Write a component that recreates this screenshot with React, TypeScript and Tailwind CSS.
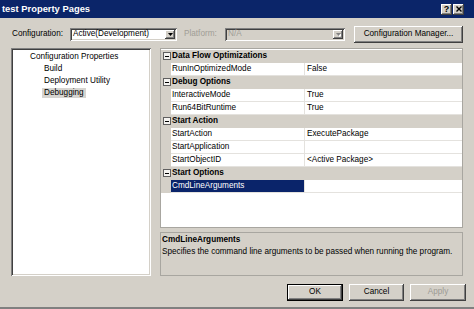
import React from 'react';

const RAISED = 'shadow-[inset_-1px_-1px_0_#404040,inset_1px_1px_0_#ffffff,inset_-2px_-2px_0_#808080]';
const SUNKEN = 'shadow-[inset_1px_1px_0_#808080,inset_-1px_-1px_0_#ffffff,inset_2px_2px_0_#404040,inset_-2px_-2px_0_#d4d0c8]';

type Row =
  | { kind: 'cat'; label: string }
  | { kind: 'prop'; name: string; value: string; selected?: boolean };

const ROWS: Row[] = [
  { kind: 'cat', label: 'Data Flow Optimizations' },
  { kind: 'prop', name: 'RunInOptimizedMode', value: 'False' },
  { kind: 'cat', label: 'Debug Options' },
  { kind: 'prop', name: 'InteractiveMode', value: 'True' },
  { kind: 'prop', name: 'Run64BitRuntime', value: 'True' },
  { kind: 'cat', label: 'Start Action' },
  { kind: 'prop', name: 'StartAction', value: 'ExecutePackage' },
  { kind: 'prop', name: 'StartApplication', value: '' },
  { kind: 'prop', name: 'StartObjectID', value: '<Active Package>' },
  { kind: 'cat', label: 'Start Options' },
  { kind: 'prop', name: 'CmdLineArguments', value: '', selected: true },
];

function DropArrow({ disabled }: { disabled?: boolean }) {
  return (
    <div className={`w-[10px] h-full bg-[#d4d0c8] flex items-center justify-center ${RAISED}`}>
      <svg width="5" height="4" viewBox="0 0 5 4">
        {disabled && <path d="M1 1h5L3.5 4z" fill="#ffffff" />}
        <path d="M0 0h5L2.5 3z" fill={disabled ? '#808080' : '#000000'} />
      </svg>
    </div>
  );
}

function Minus() {
  return (
    <div className="w-[8px] h-[8px] border border-[#606060] bg-[#f4f3f0] flex items-center justify-center">
      <div className="w-[4px] h-px bg-black" />
    </div>
  );
}

function Btn({ label, w, isDefault, disabled }: { label: string; w: string; isDefault?: boolean; disabled?: boolean }) {
  return (
    <div className={`${w} h-[17px] ${isDefault ? 'border border-black' : ''}`}>
      <div
        className={`w-full h-full bg-[#d4d0c8] flex items-center justify-center ${RAISED} ${
          disabled ? 'text-[#9c9a94]' : 'text-black'
        }`}
      >
        {label}
      </div>
    </div>
  );
}

export default function App() {
  return (
    <div
      className="w-[474px] h-[309px] bg-[#d4d0c8] flex flex-col text-[8.2px] leading-none text-black overflow-hidden"
      style={{ fontFamily: '"Liberation Sans", Arial, sans-serif' }}
    >
      {/* title bar */}
      <div className="h-[18px] bg-[#0b2569] flex items-center justify-between pl-[2px] pr-[10px]">
        <span className="text-white font-bold text-[9.4px]">test Property Pages</span>
        <div className="flex gap-[1px]">
          <div className={`w-[11px] h-[11px] bg-[#d4d0c8] flex items-center justify-center font-bold text-[9px] ${RAISED}`}>?</div>
          <div className={`w-[11px] h-[11px] bg-[#d4d0c8] flex items-center justify-center ${RAISED}`}>
            <svg width="6" height="6" viewBox="0 0 6 6">
              <path d="M0.5 0.5l5 5M5.5 0.5l-5 5" stroke="#000" strokeWidth="1.4" />
            </svg>
          </div>
        </div>
      </div>

      {/* configuration row */}
      <div className="mt-[8px] h-[17px] flex items-center pl-[12px]">
        <span className="w-[58px]">Configuration:</span>
        <div className={`w-[107px] h-[13px] bg-white flex items-center justify-between p-[2px] ${SUNKEN}`}>
          <span className="pl-[1px]">Active(Development)</span>
          <DropArrow />
        </div>
        <span className="ml-[7px] w-[41px] text-[#a09d96]">Platform:</span>
        <div className={`w-[120px] h-[13px] bg-[#d4d0c8] flex items-center justify-between p-[2px] ${SUNKEN}`}>
          <span className="pl-[1px] text-[#a09d96]">N/A</span>
          <DropArrow disabled />
        </div>
        <div className="ml-[9px]">
          <Btn label="Configuration Manager..." w="w-[109px]" />
        </div>
      </div>

      {/* panels */}
      <div className="mt-[5px] h-[228px] flex pl-[11px]">
        <div className={`w-[140px] h-full bg-white pt-[3px] ${SUNKEN}`}>
          <div className="h-[12px] flex items-center pl-[19px]">Configuration Properties</div>
          <div className="h-[12px] flex items-center pl-[33px]">Build</div>
          <div className="h-[12px] flex items-center pl-[33px]">Deployment Utility</div>
          <div className="h-[12px] flex items-center pl-[31px]">
            <span className="h-[10px] px-[2px] bg-[#d6d4d0] flex items-center">Debugging</span>
          </div>
        </div>

        <div className="ml-[9px] w-[303px] h-full flex flex-col">
          <div className="h-[180px] border border-[#a8a6a0] bg-white pt-px">
            {ROWS.map((r, i) =>
              r.kind === 'cat' ? (
                <div key={i} className="h-[13px] bg-[#d4d0c8] flex items-center border-b border-[#d4d0c8]">
                  <div className="w-[11px] flex justify-center">
                    <Minus />
                  </div>
                  <span className="font-bold">{r.label}</span>
                </div>
              ) : (
                <div key={i} className="h-[13px] flex">
                  <div className="w-[10px] bg-[#d4d0c8]" />
                  <div className="w-[134px] border-b border-r border-[#e4e2de] flex items-center">
                    <span
                      className={`h-[12px] flex items-center pl-[1px] w-full ${
                        r.selected ? 'bg-[#0a246a] text-white' : ''
                      }`}
                    >
                      {r.name}
                    </span>
                  </div>
                  <div className="flex-1 border-b border-[#e4e2de] flex items-center pl-[2px]">{r.value}</div>
                </div>
              )
            )}
          </div>
          <div className="mt-[4px] h-[44px] border border-[#a8a6a0] bg-[#d4d0c8] pt-[1px] pl-[1px]">
            <div className="h-[12px] flex items-center font-bold">CmdLineArguments</div>
            <div className="h-[12px] flex items-center">
              Specifies the command line arguments to be passed when running the program.
            </div>
          </div>
        </div>
      </div>

      {/* buttons */}
      <div className="mt-[8px] flex justify-end gap-[6px] pr-[8px]">
        <Btn label="OK" w="w-[56px]" isDefault />
        <Btn label="Cancel" w="w-[55px]" />
        <Btn label="Apply" w="w-[56px]" disabled />
      </div>
      <div className="flex-1" />
      <div className="h-[2px] bg-[#808080]" />
    </div>
  );
}
